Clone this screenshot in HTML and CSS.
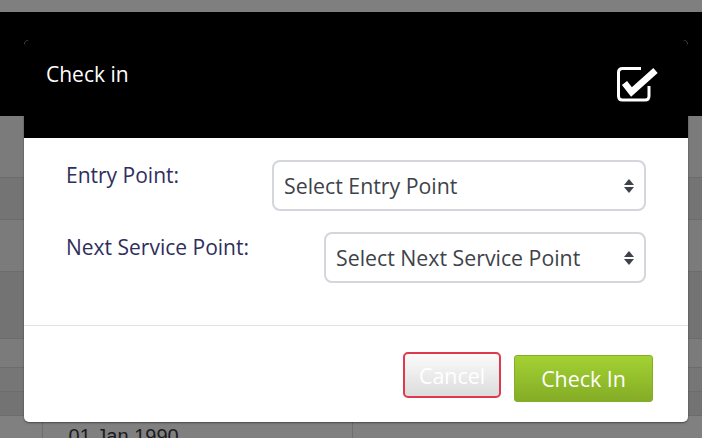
FILE: index.html
```html
<!DOCTYPE html>
<html lang="en">
<head>
<meta charset="utf-8">
<title>Check in</title>
<link rel="stylesheet" href="styles.css">
</head>
<body>
<div class="page">
  <div class="page-top"></div>
  <div class="page-header"></div>
  <div class="rows">
    <div class="row r1"></div>
    <div class="row r2"></div>
    <div class="row r3"></div>
    <div class="row r4"></div>
    <div class="row r5"></div>
    <div class="row r6"></div>
    <div class="row r7"></div>
    <div class="row r8">
      <div class="cell c1"></div>
      <div class="cell c2"><span class="caret">&#8964;</span> 01 Jan 1990</div>
      <div class="cell c3"></div>
    </div>
  </div>
</div>

<div class="modal">
  <div class="modal-header">
    <h4 class="modal-title">Check in</h4>
    <svg class="header-icon" width="42" height="36" viewBox="0 0 42 36">
      <path d="M24 1.5 H5.5 Q1.5 1.5 1.5 5.5 V29 Q1.5 33 5.5 33 H28 Q32 33 32 29 V19" fill="none" stroke="#fff" stroke-width="3"/>
      <polyline points="7.5,16 14.5,25 38.5,3.5" fill="none" stroke="#fff" stroke-width="6.5" stroke-linejoin="miter"/>
    </svg>
  </div>
  <div class="modal-body">
    <div class="form-row">
      <label class="form-label">Entry Point:</label>
      <div class="select select-entry">
        <span class="select-text">Select Entry Point</span>
        <span class="arrows"><span class="up"></span><span class="down"></span></span>
      </div>
    </div>
    <div class="form-row">
      <label class="form-label">Next Service Point:</label>
      <div class="select select-next">
        <span class="select-text">Select Next Service Point</span>
        <span class="arrows"><span class="up"></span><span class="down"></span></span>
      </div>
    </div>
  </div>
  <div class="modal-footer">
    <button class="btn btn-cancel">Cancel</button>
    <button class="btn btn-checkin">Check In</button>
  </div>
</div>
</body>
</html>
```

FILE: styles.css
```css
html, body {
  margin: 0;
  padding: 0;
}
body {
  width: 702px;
  height: 438px;
  overflow: hidden;
  background: #7f7f7f;
  font-family: "Open Sans", "DejaVu Sans", sans-serif;
  position: relative;
}
.page-top {
  height: 12px;
  background: #7f7f7f;
}
.page-header {
  height: 104px;
  background: #000;
}
.rows {
  display: flex;
  flex-direction: column;
}
.row {
  border-bottom: 1px solid #6c6c6c;
  box-sizing: border-box;
}
.r1 { height: 62px; background: #7b7b7b; }
.r2 { height: 42px; background: #747474; }
.r3 { height: 52px; background: #7b7b7b; }
.r4 { height: 67px; background: #737373; }
.r5 { height: 29px; background: #7b7b7b; }
.r6 { height: 24px; background: #767676; }
.r7 { height: 24px; background: #737373; }
.r8 {
  height: 40px;
  background: #808080;
  border-bottom: none;
  display: flex;
}
.cell { border-right: 1px solid #6e6e6e; height: 100%; }
.c1 { width: 42px; }
.c2 {
  width: 310px;
  padding: 9px 0 0 6px;
  box-sizing: border-box;
  font-family: "Liberation Sans", Arial, sans-serif;
  font-size: 20px;
  line-height: 22px;
  color: #1c1c1c;
}
.caret { font-size: 14px; margin-right: 2px; }
.c3 { flex: 1; border-right: none; }

.modal {
  position: absolute;
  left: 24px;
  top: 40px;
  width: 664px;
  background: #fff;
  border-radius: 5px;
  box-shadow: 0 1px 2px rgba(0,0,0,0.45);
  overflow: hidden;
}
.modal-header {
  background: #000;
  height: 98px;
  display: flex;
  justify-content: space-between;
  align-items: flex-start;
  padding: 0 29px 0 22px;
  box-sizing: border-box;
}
.modal-title {
  margin: 20px 0 0;
  font-size: 21px;
  line-height: 28px;
  font-weight: 400;
  color: #fff;
}
.header-icon {
  margin-top: 27px;
  display: block;
}
.modal-body {
  padding: 22px 42px 42px;
  display: flex;
  flex-direction: column;
  gap: 21px;
  border-bottom: 1px solid #dee1e6;
}
.form-row {
  display: flex;
  align-items: flex-start;
}
.form-label {
  font-size: 21px;
  line-height: 28px;
  color: #2f2e5c;
  margin-top: 1px;
}
.select {
  margin-left: auto;
  height: 51px;
  box-sizing: border-box;
  border: 2px solid #d3d6db;
  border-radius: 8px;
  display: flex;
  align-items: center;
  padding: 0 10px 0 10px;
  color: #3e424a;
}
.select-entry { width: 374px; }
.select-next { width: 322px; }
.select-text {
  font-size: 21.3px;
  flex: 1;
}
.arrows {
  display: flex;
  flex-direction: column;
  gap: 2px;
}
.up, .down {
  width: 0;
  height: 0;
  border-left: 5px solid transparent;
  border-right: 5px solid transparent;
}
.up { border-bottom: 6px solid #3e424a; }
.down { border-top: 6px solid #3e424a; }

.modal-footer {
  height: 96px;
  display: flex;
  justify-content: flex-end;
  align-items: flex-start;
  gap: 13px;
  padding: 0 35px 0 0;
  box-sizing: border-box;
}
.btn {
  font-family: "Open Sans", "DejaVu Sans", sans-serif;
  font-size: 21.4px;
  color: #fff;
  padding: 0;
  cursor: pointer;
}
.btn-cancel {
  margin-top: 26px;
  width: 98px;
  height: 46px;
  border: 2px solid #e0384d;
  border-radius: 5px;
  background: linear-gradient(#fbfbfb, #dcdcdc);
}
.btn-checkin {
  margin-top: 29px;
  width: 139px;
  height: 47px;
  border: 1px solid #84ad28;
  border-radius: 3px;
  background: linear-gradient(#a3d233, #84ac26);
}
```
